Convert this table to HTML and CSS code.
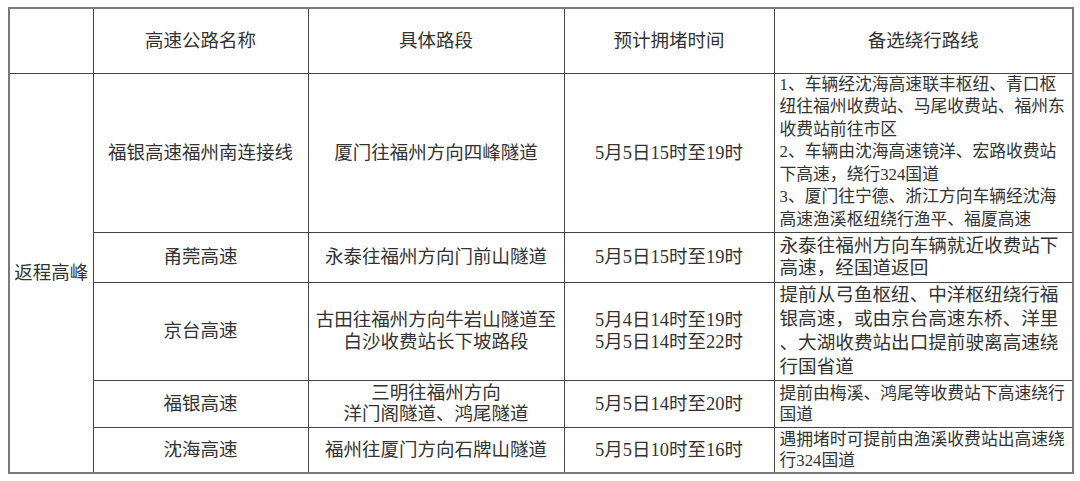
FILE: index.html
```html
<!DOCTYPE html>
<html lang="zh">
<head>
<meta charset="utf-8">
<link rel="stylesheet" href="styles.css">
</head>
<body>
<table class="grid">
  <colgroup>
    <col class="c1"><col class="c2"><col class="c3"><col class="c4"><col class="c5">
  </colgroup>
  <thead>
    <tr class="r-head">
      <th></th>
      <th>高速公路名称</th>
      <th>具体路段</th>
      <th>预计拥堵时间</th>
      <th>备选绕行路线</th>
    </tr>
  </thead>
  <tbody>
    <tr class="r1">
      <td rowspan="5" class="group">返程高峰</td>
      <td>福银高速福州南连接线</td>
      <td>厦门往福州方向四峰隧道</td>
      <td>5月5日15时至19时</td>
      <td class="alt small">1、车辆经沈海高速联丰枢纽、青口枢<br>纽往福州收费站、马尾收费站、福州东<br>收费站前往市区<br>2、车辆由沈海高速镜洋、宏路收费站<br>下高速，绕行324国道<br>3、厦门往宁德、浙江方向车辆经沈海<br>高速渔溪枢纽绕行渔平、福厦高速</td>
    </tr>
    <tr class="r2">
      <td>甬莞高速</td>
      <td>永泰往福州方向门前山隧道</td>
      <td>5月5日15时至19时</td>
      <td class="alt big">永泰往福州方向车辆就近收费站下<br>高速，经国道返回</td>
    </tr>
    <tr class="r3">
      <td>京台高速</td>
      <td>古田往福州方向牛岩山隧道至<br>白沙收费站长下坡路段</td>
      <td>5月4日14时至19时<br>5月5日14时至22时</td>
      <td class="alt big tall">提前从弓鱼枢纽、中洋枢纽绕行福<br>银高速，或由京台高速东桥、洋里<br>、大湖收费站出口提前驶离高速绕<br>行国省道</td>
    </tr>
    <tr class="r4">
      <td>福银高速</td>
      <td class="tight">三明往福州方向<br>洋门阁隧道、鸿尾隧道</td>
      <td>5月5日14时至20时</td>
      <td class="alt small tight">提前由梅溪、鸿尾等收费站下高速绕行<br>国道</td>
    </tr>
    <tr class="r5">
      <td>沈海高速</td>
      <td>福州往厦门方向石牌山隧道</td>
      <td>5月5日10时至16时</td>
      <td class="alt small tight">遇拥堵时可提前由渔溪收费站出高速绕<br>行324国道</td>
    </tr>
  </tbody>
</table>
</body>
</html>
```
FILE: styles.css
```css
html, body {
  margin: 0;
  padding: 0;
  background: #ffffff;
}
body {
  padding: 7px 8px 0 8px;
  font-family: "Liberation Serif", "Noto Sans CJK SC", serif;
  color: #333333;
}
.grid {
  border-collapse: collapse;
  table-layout: fixed;
  width: 1064px;
  border: 2px solid #7a7a7a;
}
.c1 { width: 84px; }
.c2 { width: 215px; }
.c3 { width: 256px; }
.c4 { width: 210px; }
.c5 { width: 299px; }
.grid th, .grid td {
  border: 1px solid #444444;
  font-weight: normal;
  font-size: 18.5px;
  line-height: 22px;
  text-align: center;
  vertical-align: middle;
  padding: 0;
  white-space: nowrap;
  overflow: hidden;
}
.r-head { height: 65px; }
.r1 { height: 159px; }
.r2 { height: 50px; }
.r3 { height: 98px; }
.r4 { height: 47px; }
.r5 { height: 46px; }
.grid td.alt {
  text-align: left;
  padding-left: 5px;
}
.grid td.small {
  font-size: 16.8px;
  line-height: 22.4px;
}
.grid td.big {
  font-size: 18.6px;
  line-height: 22px;
}
.grid td.tall {
  line-height: 24px;
  vertical-align: top;
}
.grid td.tight {
  line-height: 21px;
}
```
